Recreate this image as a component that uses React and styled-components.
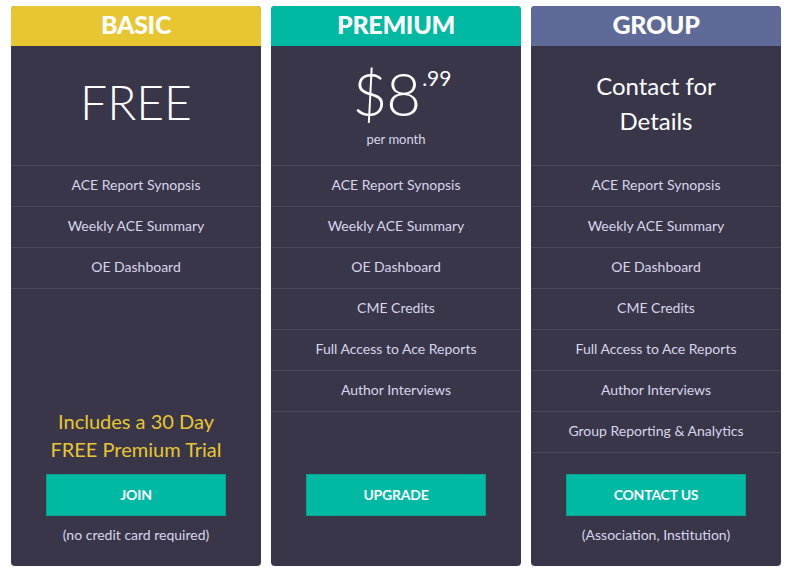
import React from 'react';
import styled, { createGlobalStyle } from 'styled-components';

const GlobalStyle = createGlobalStyle`
    * { box-sizing: border-box; }
    body {
        margin: 0;
        background: #ffffff;
        font-family: Lato, "Open Sans", sans-serif;
    }
`;

const plans = [
    {
        name: 'BASIC',
        color: '#e8c631',
        price: 'free',
        features: ['ACE Report Synopsis', 'Weekly ACE Summary', 'OE Dashboard'],
        promo: ['Includes a 30 Day', 'FREE Premium Trial'],
        action: 'JOIN',
        note: '(no credit card required)',
    },
    {
        name: 'PREMIUM',
        color: '#00b9a3',
        price: 'premium',
        features: [
            'ACE Report Synopsis',
            'Weekly ACE Summary',
            'OE Dashboard',
            'CME Credits',
            'Full Access to Ace Reports',
            'Author Interviews',
        ],
        action: 'UPGRADE',
        note: '',
    },
    {
        name: 'GROUP',
        color: '#5f6a98',
        price: 'contact',
        features: [
            'ACE Report Synopsis',
            'Weekly ACE Summary',
            'OE Dashboard',
            'CME Credits',
            'Full Access to Ace Reports',
            'Author Interviews',
            'Group Reporting & Analytics',
        ],
        action: 'CONTACT US',
        note: '(Association, Institution)',
    },
];

const renderPrice = (type) => {
    if (type === 'free') return <BigWord>FREE</BigWord>;
    if (type === 'premium')
        return (
            <>
                <Amount>
                    $8<Cents>.99</Cents>
                </Amount>
                <Period>per month</Period>
            </>
        );
    return (
        <ContactText>
            Contact for
            <br />
            Details
        </ContactText>
    );
};

const App = () => {
    return (
        <>
            <GlobalStyle />
            <Page>
                {plans.map((plan) => (
                    <Card key={plan.name}>
                        <Header color={plan.color}>{plan.name}</Header>
                        <PriceBox>{renderPrice(plan.price)}</PriceBox>
                        <FeatureList>
                            {plan.features.map((f) => (
                                <Feature key={f}>{f}</Feature>
                            ))}
                        </FeatureList>
                        <Footer>
                            {plan.promo && (
                                <Promo>
                                    {plan.promo[0]}
                                    <br />
                                    {plan.promo[1]}
                                </Promo>
                            )}
                            <ActionButton>{plan.action}</ActionButton>
                            <Note>{plan.note}</Note>
                        </Footer>
                    </Card>
                ))}
            </Page>
        </>
    );
};

export default App;

const Page = styled.div`
    display: flex;
    gap: 10px;
    padding: 6px 11px;
`;

const Card = styled.div`
    width: 250px;
    height: 560px;
    background: #39364a;
    border-radius: 4px;
    overflow: hidden;
    display: flex;
    flex-direction: column;
`;

const Header = styled.div`
    height: 40px;
    padding-bottom: 4px;
    background: ${(p) => p.color};
    color: #ffffff;
    font-weight: 900;
    font-size: 25px;
    line-height: 36px;
    text-align: center;
    letter-spacing: -0.3px;
`;

const PriceBox = styled.div`
    height: 120px;
    border-bottom: 1px solid #4b4859;
    display: flex;
    flex-direction: column;
    align-items: center;
    justify-content: center;
    color: #ffffff;
`;

const BigWord = styled.div`
    font-size: 48px;
    font-weight: 300;
    line-height: 1;
    margin-top: -8px;
`;

const Amount = styled.div`
    font-size: 60px;
    font-weight: 300;
    line-height: 56px;
    position: relative;
    left: 5px;
    letter-spacing: -1px;
`;

const Cents = styled.span`
    font-size: 21px;
    font-weight: 400;
    vertical-align: top;
    line-height: 20px;
    letter-spacing: 0;
    position: relative;
    top: 3px;
    left: 2px;
`;

const Period = styled.div`
    font-size: 13px;
    color: #d8d5ea;
    margin-top: 10px;
`;

const ContactText = styled.div`
    font-size: 24px;
    line-height: 35px;
    text-align: center;
    margin-top: -6px;
`;

const FeatureList = styled.div`
    display: flex;
    flex-direction: column;
`;

const Feature = styled.div`
    height: 41px;
    padding-bottom: 3px;
    border-bottom: 1px solid #4b4859;
    display: flex;
    align-items: center;
    justify-content: center;
    font-size: 14px;
    color: #d8d5ea;
`;

const Footer = styled.div`
    margin-top: auto;
    padding: 0 35px 22px;
    display: flex;
    flex-direction: column;
    align-items: center;
`;

const Promo = styled.div`
    color: #e8c631;
    font-size: 20px;
    line-height: 28px;
    text-align: center;
    margin-bottom: 10px;
    position: relative;
    top: -1px;
`;

const ActionButton = styled.button`
    width: 180px;
    height: 42px;
    padding-bottom: 2px;
    background: #00b9a3;
    border: 1px solid #07a48d;
    color: #ffffff;
    font-family: inherit;
    font-weight: 700;
    font-size: 14px;
    letter-spacing: -0.2px;
    cursor: pointer;
`;

const Note = styled.div`
    margin-top: 10px;
    height: 18px;
    line-height: 17px;
    font-size: 14px;
    color: #d8d5ea;
`;
